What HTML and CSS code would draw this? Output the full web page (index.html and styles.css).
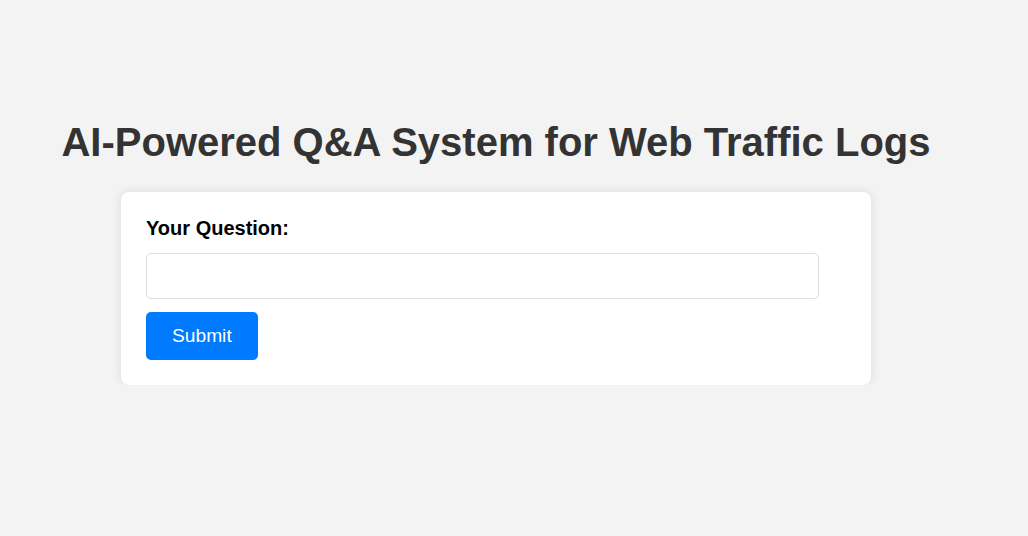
FILE: index.html
```html
<!DOCTYPE html>
<html lang="en">
<head>
<meta charset="utf-8">
<title>AI-Powered Q&amp;A System for Web Traffic Logs</title>
<link rel="stylesheet" href="styles.css">
</head>
<body>
<main class="page">
  <h1 class="title">AI-Powered Q&amp;A System for Web Traffic Logs</h1>
  <form class="card">
    <label class="label" for="question">Your Question:</label>
    <input class="input" type="text" id="question" name="question">
    <button class="button" type="button">Submit</button>
  </form>
</main>
</body>
</html>
```

FILE: styles.css
```css
html, body {
  margin: 0;
  padding: 0;
  background: #f3f3f3;
}

body {
  font-family: "Liberation Sans", Arial, sans-serif;
}

.page {
  display: flex;
  flex-direction: column;
  align-items: center;
  padding: 120px 36px 0 0;
}

.title {
  margin: 0 0 27px;
  font-size: 40px;
  font-weight: bold;
  color: #333;
  text-align: center;
}

.card {
  box-sizing: border-box;
  width: 750px;
  padding: 25px;
  background: #fff;
  border-radius: 8px;
  box-shadow: 0 0 10px rgba(0, 0, 0, 0.1);
  display: flex;
  flex-direction: column;
  align-items: flex-start;
}

.label {
  font-size: 20px;
  font-weight: bold;
  color: #000;
  margin-bottom: 13px;
}

.input {
  box-sizing: border-box;
  width: 673px;
  height: 46px;
  padding: 10px;
  font-family: inherit;
  font-size: 19.2px;
  border: 1px solid #ddd;
  border-radius: 5px;
  background: #fff;
  margin: 0 0 13px;
  outline: none;
}

.button {
  box-sizing: border-box;
  height: 48px;
  padding: 0 26px;
  font-family: inherit;
  font-size: 19.2px;
  color: #fff;
  background: #007bff;
  border: none;
  border-radius: 5px;
  cursor: pointer;
}
```
